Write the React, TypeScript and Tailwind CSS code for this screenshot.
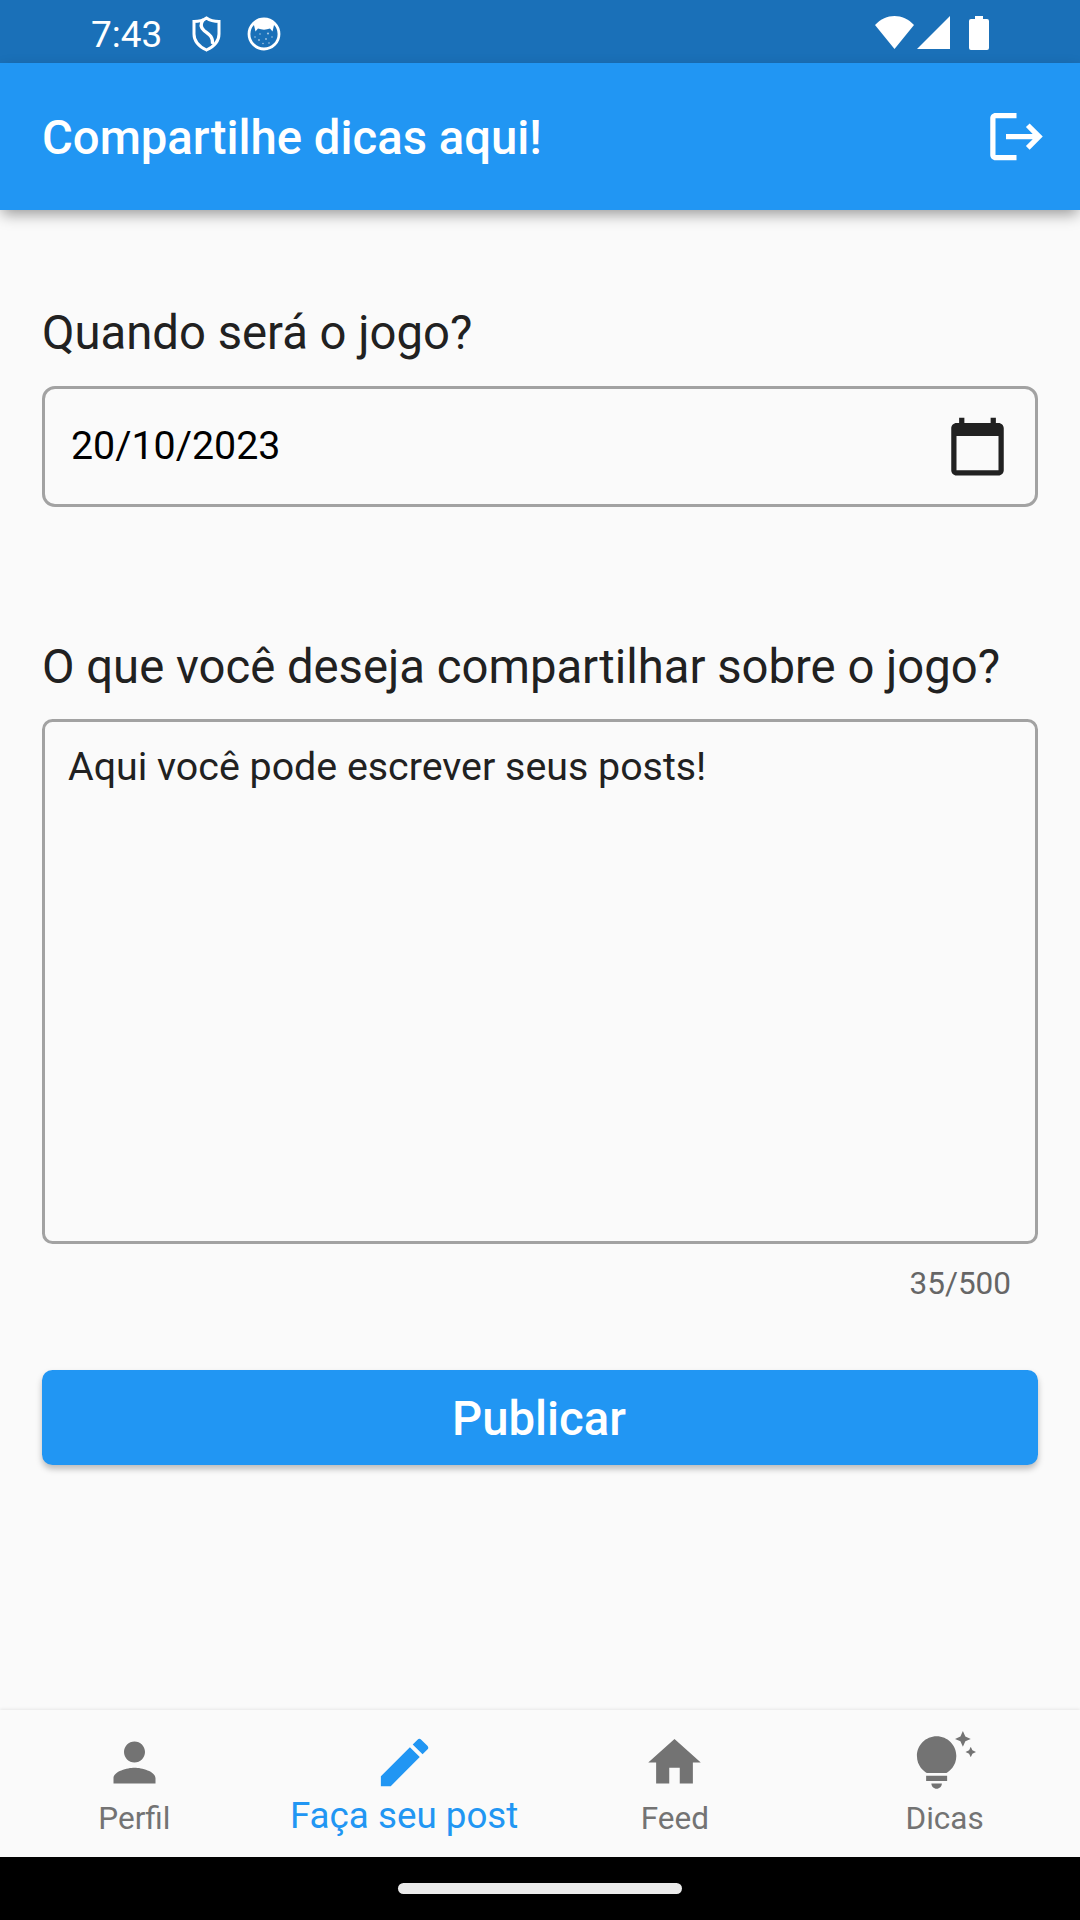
import { useState } from "react";
import {
  MdCalendarToday,
  MdEdit,
  MdHome,
  MdLogout,
  MdPerson,
  MdTipsAndUpdates,
} from "react-icons/md";
import type { IconType } from "react-icons";

type Tab = {
  id: string;
  label: string;
  icon: IconType;
};

const tabs: Tab[] = [
  { id: "perfil", label: "Perfil", icon: MdPerson },
  { id: "post", label: "Faça seu post", icon: MdEdit },
  { id: "feed", label: "Feed", icon: MdHome },
  { id: "dicas", label: "Dicas", icon: MdTipsAndUpdates },
];

function StatusBar() {
  return (
    <div className="flex h-[63px] shrink-0 items-center justify-between bg-[#1a70b8] pl-[91px] pr-[91px] text-white">
      <div className="flex items-center">
        <span className="w-[100px] pt-[7px] text-[37px] leading-[44px] whitespace-nowrap">7:43</span>
        {/* escudo */}
        <svg className="mt-[4px] h-[36px] w-[32px]" viewBox="0 0 32 36" fill="none" stroke="currentColor" strokeWidth="3">
          <path d="M15.500 2C12 4.500 7.500 5.500 3 5.500V18c0 7 5 12.500 12.500 16C23 30.500 28 25 28 18V5.500C23.500 5.500 19 4.500 15.500 2z" />
          <path d="M12.500 3.500C9 8 9.500 11.500 13 14.500S22.500 20 21.500 28" strokeWidth="3.2" />
        </svg>
        {/* rosto do gato */}
        <svg className="mt-[4px] ml-[24px] h-[34px] w-[34px]" viewBox="0 0 34 34">
          <circle cx="17" cy="17" r="15" fill="none" stroke="currentColor" strokeWidth="2.800" />
          <path d="M6.500 6C12 0 22 0 27.500 6L25.500 14.500 23 11.500C19 13 15 13 11 11.500L8.500 14.500z" fill="currentColor" />
          <g fill="currentColor" opacity=".6">
            <circle cx="8" cy="20" r=".8" />
            <circle cx="13" cy="17" r=".8" />
            <circle cx="21" cy="16.500" r="1.100" />
            <circle cx="12" cy="23" r=".9" />
            <circle cx="19" cy="22" r=".9" />
            <circle cx="25" cy="20" r=".8" />
            <circle cx="16" cy="26.500" r=".8" />
            <circle cx="22" cy="26" r=".8" />
          </g>
        </svg>
      </div>
      <div className="flex items-center pt-[3px]">
        <svg className="h-[34px] w-[39px]" viewBox="0 0 39 34" fill="currentColor">
          <path d="M0 9C11-3 28-3 39 9L19.500 33z" />
        </svg>
        <svg className="ml-[3px] h-[34px] w-[33px]" viewBox="0 0 33 34" fill="currentColor">
          <path d="M33 0v33H0z" />
        </svg>
        <svg className="ml-[19px] h-[34px] w-[20px]" viewBox="0 0 20 34" fill="currentColor">
          <path d="M6 0h8v3h4a2 2 0 0 1 2 2v27a2 2 0 0 1-2 2H2a2 2 0 0 1-2-2V5a2 2 0 0 1 2-2h4z" />
        </svg>
      </div>
    </div>
  );
}

export default function App() {
  const [date] = useState("20/10/2023");
  const [post] = useState("Aqui você pode escrever seus posts!");
  const [active, setActive] = useState("post");

  return (
    <div className="flex h-[1920px] w-[1080px] flex-col overflow-hidden bg-[#fafafa] font-[Roboto,sans-serif] text-[#212121]">
      <StatusBar />
      <header className="flex h-[147px] shrink-0 items-center justify-between bg-[#2196f3] pr-[32px] pl-[42px] text-white shadow-[0_6px_14px_-2px_rgba(0,0,0,0.4)]">
        <h1 className="pt-[2px] text-[47.25px] leading-[56px] font-medium whitespace-nowrap">Compartilhe dicas aqui!</h1>
        <button aria-label="Sair">
          <MdLogout className="size-[63px]" />
        </button>
      </header>

      <main className="flex flex-1 flex-col px-[42px] pt-[95px]">
        <label className="text-[47.25px] leading-[56px] whitespace-nowrap">Quando será o jogo?</label>
        <div className="mt-[25px] flex h-[121px] items-center justify-between rounded-[13px] border-[3px] border-[#a2a2a2] pr-[26px] pl-[26px]">
          <span className="pb-[2px] text-[39.375px] leading-[46px] whitespace-nowrap text-black">{date}</span>
          <MdCalendarToday className="size-[63px]" />
        </div>

        <label className="mt-[132px] text-[47.25px] leading-[56px] whitespace-nowrap">
          O que você deseja compartilhar sobre o jogo?
        </label>
        <div className="mt-[24px] h-[525px] rounded-[10.500px] border-[3px] border-[#a2a2a2] px-[23px] pt-[22px]">
          <p className="text-[39.375px] leading-[46px]">{post}</p>
        </div>
        <span className="mt-[21px] pr-[27px] text-right text-[31.500px] leading-[37px] text-[#666666]">
          {post.length}/500
        </span>

        <button className="mt-[68px] h-[95px] rounded-[10.500px] bg-[#2196f3] pt-[2px] pr-[2px] text-[47.25px] leading-[56px] font-medium text-white shadow-[0_4px_6px_rgba(0,0,0,0.25)]">
          Publicar
        </button>
      </main>

      <nav className="flex h-[147px] shrink-0 bg-[#fafafa] shadow-[0_-1px_3px_rgba(0,0,0,0.08)]">
        {tabs.map(({ id, label, icon: Icon }) => (
          <button
            key={id}
            onClick={() => setActive(id)}
            className={
              id === active
                ? "flex flex-1 flex-col items-center pt-[21px] pr-[2px] text-[36.750px] leading-[43px] text-[#2196f3]"
                : "flex flex-1 flex-col items-center pt-[21px] pr-px text-[31.500px] leading-[49px] text-[#737373]"
            }
          >
            <Icon className="size-[63px] shrink-0" />
            <span className="whitespace-nowrap">{label}</span>
          </button>
        ))}
      </nav>
      <div className="flex h-[63px] shrink-0 items-center justify-center bg-black">
        <div className="h-[11px] w-[284px] rounded-full bg-[#ebebeb]" />
      </div>
    </div>
  );
}
